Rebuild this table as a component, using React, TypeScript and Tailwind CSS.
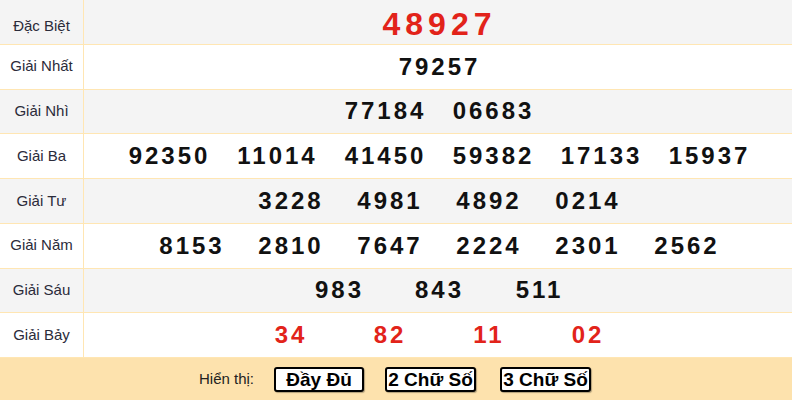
import React from "react"

type Row = {
  label: string
  nums: string[]
  slot: string
  red?: boolean
  big?: boolean
  shade?: boolean
}

const ROWS: Row[] = [
  { label: "Đặc Biệt", nums: ["48927"], slot: "w-auto", red: true, big: true, shade: true },
  { label: "Giải Nhất", nums: ["79257"], slot: "w-[108px]" },
  { label: "Giải Nhì", nums: ["77184", "06683"], slot: "w-[108px]", shade: true },
  { label: "Giải Ba", nums: ["92350", "11014", "41450", "59382", "17133", "15937"], slot: "w-[108px]" },
  { label: "Giải Tư", nums: ["3228", "4981", "4892", "0214"], slot: "w-[99px]", shade: true },
  { label: "Giải Năm", nums: ["8153", "2810", "7647", "2224", "2301", "2562"], slot: "w-[99px]" },
  { label: "Giải Sáu", nums: ["983", "843", "511"], slot: "w-[100px]", shade: true },
  { label: "Giải Bảy", nums: ["34", "82", "11", "02"], slot: "w-[99px]", red: true },
]

export default function App() {
  return (
    <div className="w-[792px] h-[400px] overflow-hidden bg-white font-['Liberation_Sans',Arial,sans-serif]">
      {ROWS.map((row) => (
        <div
          key={row.label}
          className={`grid grid-cols-[84px_1fr] h-[44.75px] border-b border-[#ffe6b3] ${
            row.shade ? "bg-[#f4f4f4]" : "bg-white"
          }`}
        >
          <div className="flex items-center justify-center border-r border-[#ffe6b3] text-[15px] text-[#2b2b3a]">
            {row.label}
          </div>
          <div className={`flex items-center justify-center ${row.big ? "pb-[5px]" : ""}`}>
            {row.nums.map((n, i) => (
              <span
                key={i}
                className={`inline-block text-center font-bold ${row.slot} ${
                  row.big
                    ? "text-[32px] tracking-[5px] pl-[3px] text-[#e2231a]"
                    : row.red
                    ? "text-[24px] tracking-[3px] pl-[3px] text-[#e2231a]"
                    : "text-[24px] tracking-[3px] pl-[3px] text-[#111]"
                }`}
              >
                {n}
              </span>
            ))}
          </div>
        </div>
      ))}
      <div className="flex items-center justify-center h-[42px] bg-[#fde2ad] pr-[2px]">
        <span className="text-[15px] text-[#222] mr-[20px]">Hiển thị:</span>
        <button className="w-[90px] h-[25px] flex items-center justify-center bg-white border-2 border-black rounded-[3px] shadow-[1px_1px_1px_rgba(0,0,0,0.3)] text-[19px] font-bold text-black leading-none mr-[21px] whitespace-nowrap">
          Đầy Đủ
        </button>
        <button className="w-[91px] h-[25px] flex items-center justify-center bg-white border-2 border-black rounded-[3px] shadow-[1px_1px_1px_rgba(0,0,0,0.3)] text-[19px] font-bold text-black leading-none mr-[24px] whitespace-nowrap">
          2 Chữ Số
        </button>
        <button className="w-[91px] h-[25px] flex items-center justify-center bg-white border-2 border-black rounded-[3px] shadow-[1px_1px_1px_rgba(0,0,0,0.3)] text-[19px] font-bold text-black leading-none whitespace-nowrap">
          3 Chữ Số
        </button>
      </div>
    </div>
  )
}
